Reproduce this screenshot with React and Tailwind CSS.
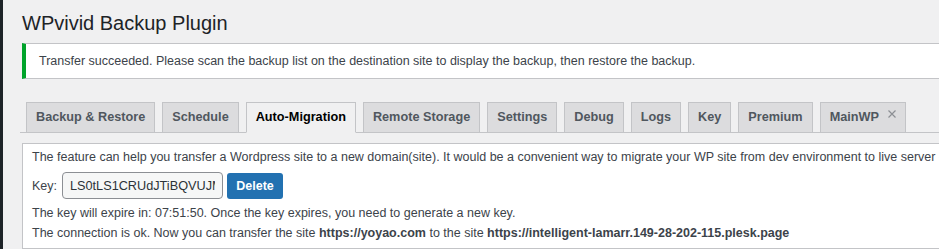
import React from "react";

const tabs = [
  "Backup & Restore",
  "Schedule",
  "Auto-Migration",
  "Remote Storage",
  "Settings",
  "Debug",
  "Logs",
  "Key",
  "Premium",
  "MainWP",
];

function Tab({ label, active, closable }) {
  return (
    <div
      className={`-mb-px flex h-[31px] items-center border border-[#c3c4c7] px-[9px] text-[12.7px] font-bold leading-none ${
        active
          ? "border-b-[#f0f0f1] bg-[#f0f0f1] text-[#000]"
          : "bg-[#dcdcde] text-[#50575e]"
      }`}
    >
      <span>{label}</span>
      {closable && (
        <svg
          className="ml-[9px] -mt-[8px] h-[8px] w-[8px]"
          viewBox="0 0 8 8"
          fill="none"
          stroke="#8c8f94"
          strokeWidth="1.2"
        >
          <path d="M0.5 0.5l7 7M7.5 0.5l-7 7" />
        </svg>
      )}
    </div>
  );
}

export default function App() {
  return (
    <div
      className="flex h-[249px] w-[939px] overflow-hidden bg-[#f0f0f1] text-[#3c434a]"
      style={{ fontFamily: '"Liberation Sans", Arial, sans-serif' }}
    >
      {/* admin menu edge */}
      <div className="w-[3px] shrink-0 bg-[#1d2327]" />

      <div className="min-w-[1000px] pl-[17px]">
        <h1 className="ml-[2px] pt-[10px] text-[20px] font-normal leading-[27px] text-[#1d2327]">
          WPvivid Backup Plugin
        </h1>

        {/* notice */}
        <div className="ml-[2px] mt-[6px] border border-l-4 border-[#c3c4c7] border-l-[#00a32a] bg-white px-[13px] py-[8px] text-[12.5px] leading-[18px]">
          Transfer succeeded. Please scan the backup list on the destination
          site to display the backup, then restore the backup.
        </div>

        {/* tabs */}
        <div className="mt-[23px] flex gap-[7px] border-b border-[#c3c4c7] pl-[6px]">
          {tabs.map((t) => (
            <Tab
              key={t}
              label={t}
              active={t === "Auto-Migration"}
              closable={t === "MainWP"}
            />
          ))}
        </div>

        {/* content */}
        <div className="ml-[2px] mt-[10px] whitespace-nowrap border border-[#c3c4c7] bg-white px-[9px] pb-[5px] pt-[3px] text-[12.5px] leading-[20px]">
          <p>
            The feature can help you transfer a Wordpress site to a new
            domain(site). It would be a convenient way to migrate your WP site
            from dev environment to live server or from old server to new
            server.
          </p>
          <div className="mt-[5px] flex items-center">
            <span>Key:</span>
            <input
              readOnly
              value="LS0tLS1CRUdJTiBQVUJMSUMgS0VZLS0tLS0"
              className="ml-[5px] h-[27px] w-[161px] rounded-[4px] border border-[#8c8f94] bg-[#f6f7f7] px-[7px] text-[12.7px] text-[#2c3338] outline-none"
            />
            <button className="ml-[4px] h-[26px] w-[56px] rounded-[3px] bg-[#2271b1] text-[12.5px] font-bold text-white">
              Delete
            </button>
          </div>
          <p className="mt-[4px]">
            The key will expire in: 07:51:50. Once the key expires, you need to
            generate a new key.
          </p>
          <p>
            The connection is ok. Now you can transfer the site{" "}
            <b className="font-bold">https://yoyao.com</b> to the site{" "}
            <b className="font-bold">
              https://intelligent-lamarr.149-28-202-115.plesk.page
            </b>
          </p>
        </div>
      </div>
    </div>
  );
}
